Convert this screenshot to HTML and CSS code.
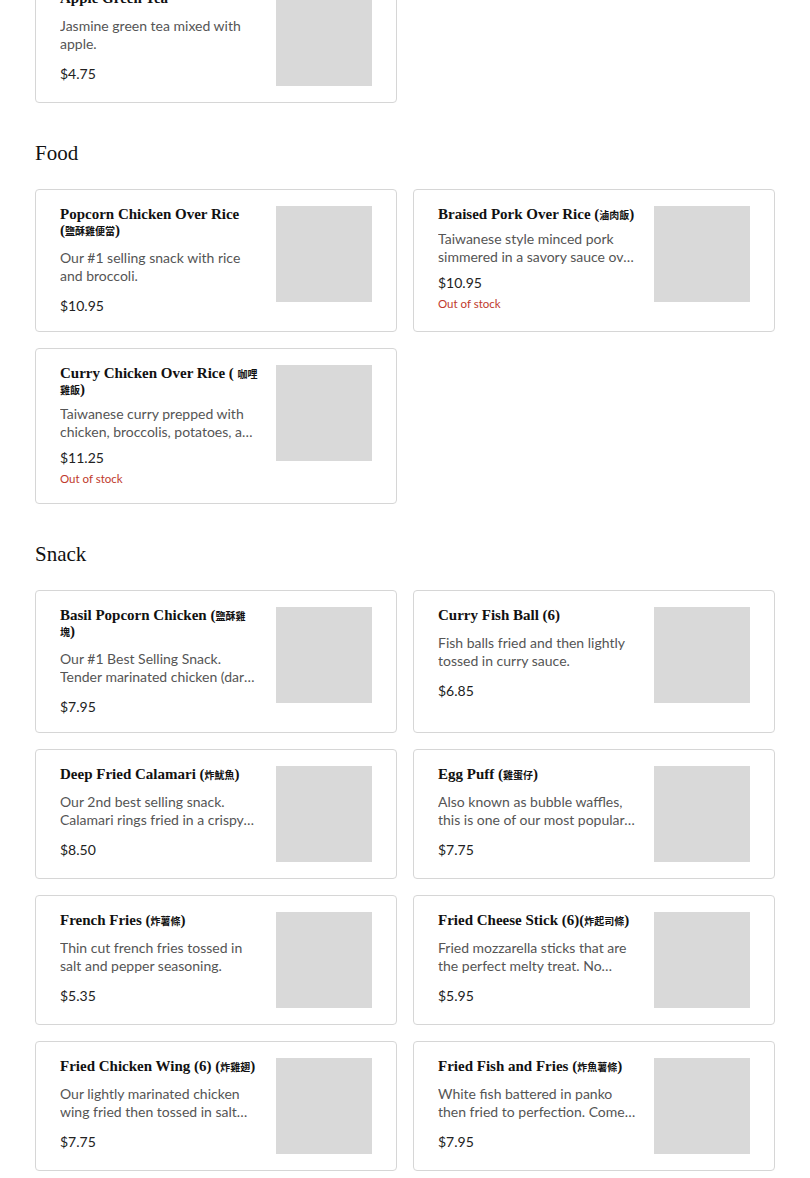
FILE: index.html
```html
<!DOCTYPE html>
<html lang="en">
<head>
    <meta charset="UTF-8">
    <meta name="viewport" content="width=device-width, initial-scale=1.0">
    <title>Menu</title>
    <link rel="stylesheet" href="styles.css">
</head>
<body>
    <div class="menu">
        <section class="category category--first">
            <div class="items">
                <div class="item">
                    <div class="item-info">
                        <h3>Apple Green Tea</h3>
                        <p class="desc">Jasmine green tea mixed with apple.</p>
                        <p class="price">$4.75</p>
                    </div>
                    <div class="thumb"></div>
                </div>
            </div>
        </section>

        <section class="category">
            <h2>Food</h2>
            <div class="items">
                <div class="item">
                    <div class="item-info">
                        <h3>Popcorn Chicken Over Rice <span class="nowrap">(<span class="zh">鹽酥雞便當</span>)</span></h3>
                        <p class="desc">Our #1 selling snack with rice and broccoli.</p>
                        <p class="price">$10.95</p>
                    </div>
                    <div class="thumb"></div>
                </div>
                <div class="item item--soldout">
                    <div class="item-info">
                        <h3>Braised Pork Over Rice (<span class="zh">滷肉飯</span>)</h3>
                        <p class="desc">Taiwanese style minced pork simmered in a savory sauce over rice with a braised egg and vegetables.</p>
                        <p class="price">$10.95</p>
                        <p class="stock">Out of stock</p>
                    </div>
                    <div class="thumb"></div>
                </div>
                <div class="item item--soldout">
                    <div class="item-info">
                        <h3>Curry Chicken Over Rice ( <span class="zh">咖哩雞飯</span>)</h3>
                        <p class="desc">Taiwanese curry prepped with chicken, broccolis, potatoes, and carrots over rice.</p>
                        <p class="price">$11.25</p>
                        <p class="stock">Out of stock</p>
                    </div>
                    <div class="thumb"></div>
                </div>
            </div>
        </section>

        <section class="category">
            <h2>Snack</h2>
            <div class="items">
                <div class="item">
                    <div class="item-info">
                        <h3>Basil Popcorn Chicken (<span class="zh">鹽酥雞塊</span>)</h3>
                        <p class="desc">Our #1 Best Selling Snack. Tender marinated chicken (dark meat) fried with basil.</p>
                        <p class="price">$7.95</p>
                    </div>
                    <div class="thumb"></div>
                </div>
                <div class="item">
                    <div class="item-info">
                        <h3>Curry Fish Ball (6)</h3>
                        <p class="desc">Fish balls fried and then lightly tossed in curry sauce.</p>
                        <p class="price">$6.85</p>
                    </div>
                    <div class="thumb"></div>
                </div>
                <div class="item">
                    <div class="item-info">
                        <h3>Deep Fried Calamari (<span class="zh">炸魷魚</span>)</h3>
                        <p class="desc">Our 2nd best selling snack. Calamari rings fried in a crispy batter and tossed in salt and pepper.</p>
                        <p class="price">$8.50</p>
                    </div>
                    <div class="thumb"></div>
                </div>
                <div class="item">
                    <div class="item-info">
                        <h3>Egg Puff (<span class="zh">雞蛋仔</span>)</h3>
                        <p class="desc">Also known as bubble waffles, this is one of our most popular desserts.</p>
                        <p class="price">$7.75</p>
                    </div>
                    <div class="thumb"></div>
                </div>
                <div class="item">
                    <div class="item-info">
                        <h3>French Fries (<span class="zh">炸薯條</span>)</h3>
                        <p class="desc">Thin cut french fries tossed in salt and pepper seasoning.</p>
                        <p class="price">$5.35</p>
                    </div>
                    <div class="thumb"></div>
                </div>
                <div class="item">
                    <div class="item-info">
                        <h3>Fried Cheese Stick (6)(<span class="zh">炸起司條</span>)</h3>
                        <p class="desc">Fried mozzarella sticks that are the perfect melty treat. No dipping sauce needed.</p>
                        <p class="price">$5.95</p>
                    </div>
                    <div class="thumb"></div>
                </div>
                <div class="item">
                    <div class="item-info">
                        <h3>Fried Chicken Wing (6) (<span class="zh">炸雞翅</span>)</h3>
                        <p class="desc">Our lightly marinated chicken wing fried then tossed in salt and pepper.</p>
                        <p class="price">$7.75</p>
                    </div>
                    <div class="thumb"></div>
                </div>
                <div class="item">
                    <div class="item-info">
                        <h3>Fried Fish and Fries (<span class="zh">炸魚薯條</span>)</h3>
                        <p class="desc">White fish battered in panko then fried to perfection. Comes with a side of fries.</p>
                        <p class="price">$7.95</p>
                    </div>
                    <div class="thumb"></div>
                </div>
            </div>
        </section>
    </div>
</body>
</html>
```

FILE: styles.css
```css
body {
    margin: 0;
    background: #fff;
    font-family: "Lato", "Noto Sans", sans-serif;
    color: #222;
}
.menu {
    padding: 0 35px 40px 35px;
}
.category {
    margin-top: 38px;
}
.category--first {
    margin-top: -27px;
}
.category h2 {
    margin: 0 0 24px;
    font-family: "Liberation Serif", serif;
    font-size: 21px;
    line-height: 24px;
    font-weight: normal;
    color: #111;
}
.items {
    display: grid;
    grid-template-columns: 1fr 1fr;
    gap: 16px;
}
.item {
    display: flex;
    align-items: flex-start;
    gap: 18px;
    padding: 16px 24px;
    border: 1px solid #d6d6d6;
    border-radius: 4px;
    background: #fff;
}
.item-info {
    flex: 1;
    min-width: 0;
}
.item h3 {
    margin: 0;
    font-family: "Liberation Serif", serif;
    font-size: 15px;
    line-height: 16px;
    font-weight: bold;
    color: #111;
}
.item h3 .zh {
    font-family: "Liberation Serif", "Noto Sans CJK TC", serif;
    font-size: 10px;
    line-height: 1;
}
.nowrap {
    white-space: nowrap;
}
.desc {
    margin: 11px 0 0;
    font-size: 14px;
    line-height: 18px;
    color: #555;
    display: -webkit-box;
    -webkit-line-clamp: 2;
    -webkit-box-orient: vertical;
    overflow: hidden;
}
.price {
    margin: 12px 0 0;
    font-size: 14px;
    line-height: 18px;
    color: #222;
}
.item--soldout .desc {
    margin-top: 8px;
}
.item--soldout .price {
    margin-top: 8px;
}
.stock {
    margin: 3px 0 0;
    font-size: 11.5px;
    line-height: 17px;
    color: #c0392b;
}
.thumb {
    flex-shrink: 0;
    width: 96px;
    height: 96px;
    background: #d9d9d9;
}
```
